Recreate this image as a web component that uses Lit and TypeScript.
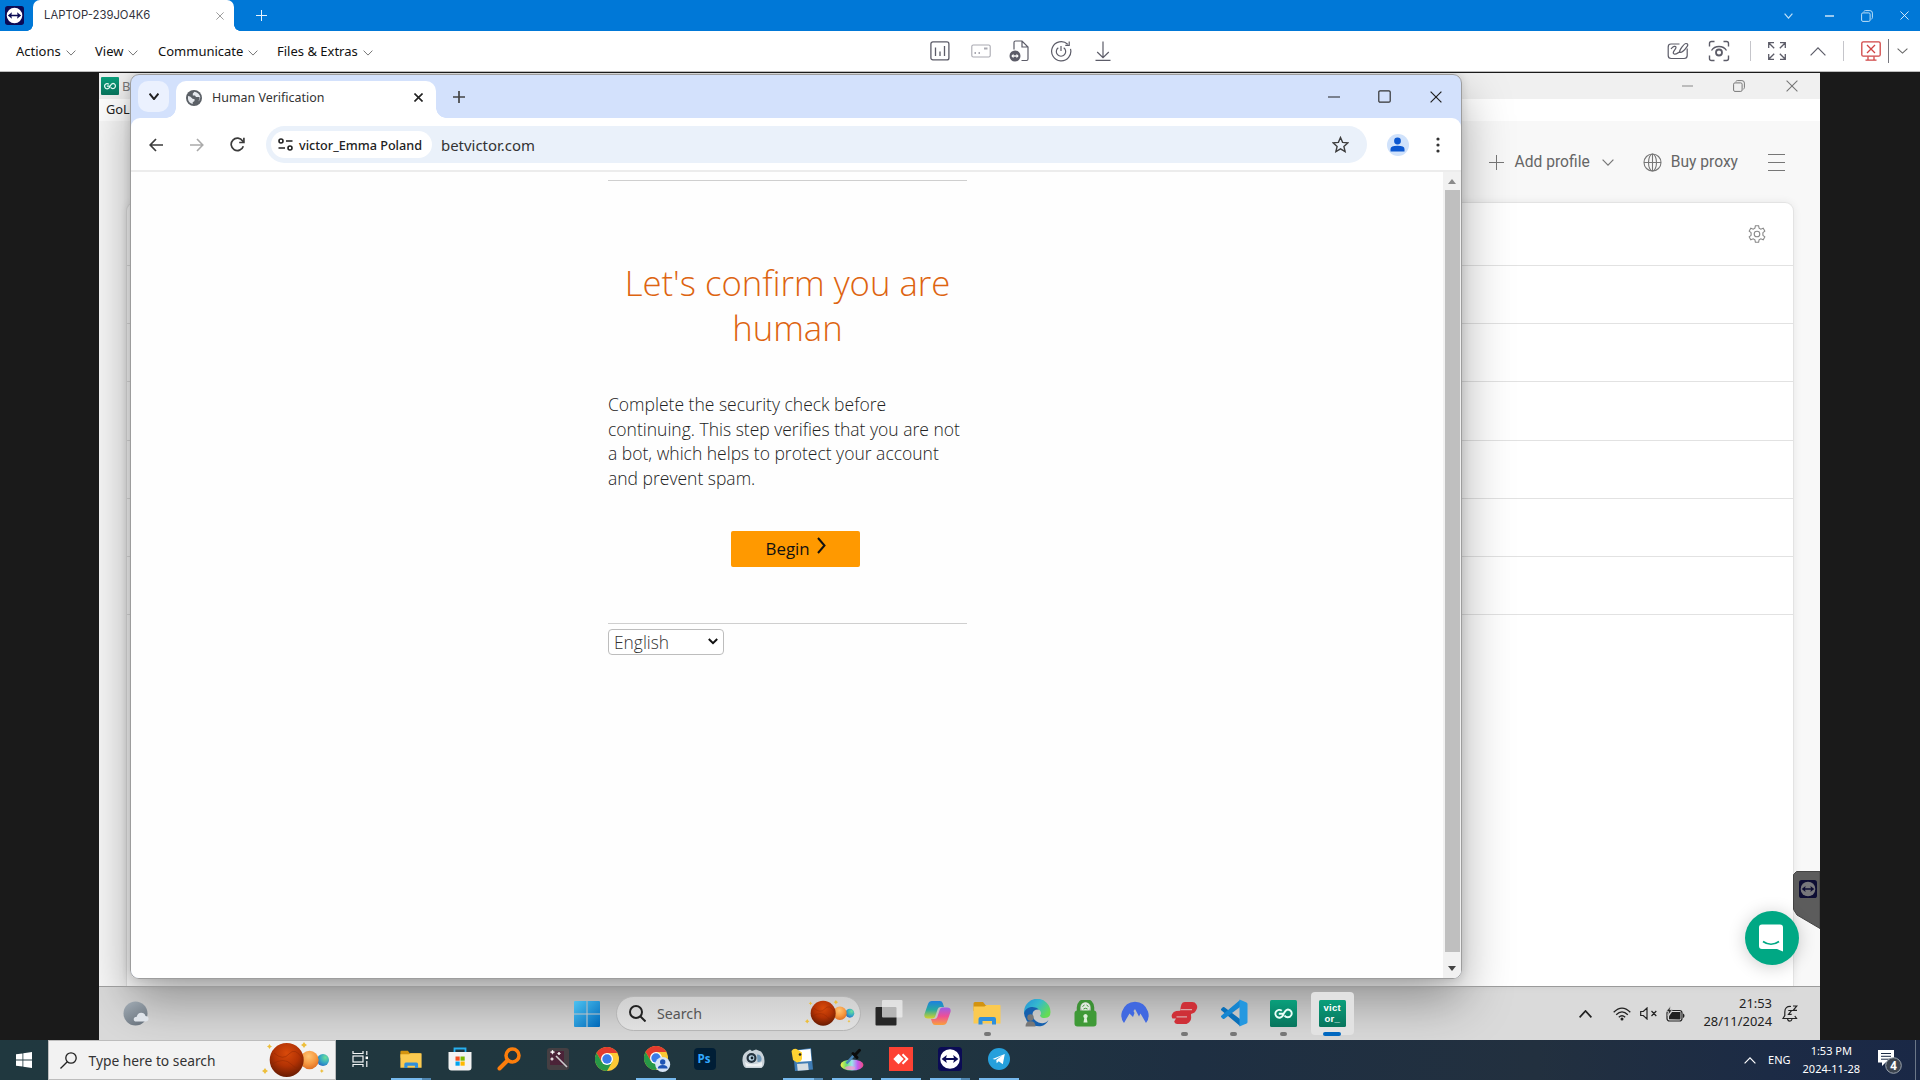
import { LitElement, html, svg, css } from "lit";
import { customElement } from "lit/decorators.js";

/* ---------- shared glyphs ---------- */

const chevron = (w: number, h: number, color: string, sw = 1.2, up = false) => html`
  <svg width=${w} height=${h} viewBox="0 0 ${w} ${h}" fill="none" stroke=${color} stroke-width=${sw}>
    <path d=${up ? `M.6 ${h - 0.6}L${w / 2} .9L${w - 0.6} ${h - 0.6}` : `M.6 .6L${w / 2} ${h - 0.9}L${w - 0.6} .6`} />
  </svg>`;

const teamLogo = (s: number, bg = "#0b0b55", fg = "#fff") => html`
  <svg width=${s} height=${s} viewBox="0 0 24 24">
    <rect width="24" height="24" rx="3.5" fill=${bg} />
    <circle cx="12" cy="12" r="9.8" fill=${fg} />
    <path d="M3.6 12l5.2-4-.7 2.9h7.8L15.2 8l5.2 4-5.2 4 .7-2.9H8.1l.7 2.9z" fill=${bg} />
  </svg>`;

const cross = (s: number, color: string, sw = 1) => html`
  <svg width=${s} height=${s} viewBox="0 0 10 10" fill="none" stroke=${color} stroke-width=${sw}>
    <path d="M.5.5l9 9M9.5.5l-9 9" />
  </svg>`;

const minus = (w: number, color: string) => html`
  <svg width=${w} height="2" viewBox="0 0 ${w} 2"><path d="M0 1h${w}" stroke=${color} stroke-width="1.2" /></svg>`;

const restore = (s: number, color: string) => html`
  <svg width=${s} height=${s} viewBox="0 0 12 12" fill="none" stroke=${color}>
    <rect x=".6" y="2.9" width="8.5" height="8.5" rx="1.3" />
    <path d="M2.9 1.6Q3.2.6 4.3.6h4.6q2.5 0 2.5 2.5v4.6q0 1-1 1.4" />
  </svg>`;

const planets = (w: number) => html`
  <svg width=${w} height=${(w * 36) / 68} viewBox="0 0 68 36">
    <defs>
      <radialGradient id="pa" cx=".5" cy=".3" r=".75"><stop offset="0" stop-color="#d94a0a" /><stop offset=".5" stop-color="#b23204" /><stop offset="1" stop-color="#5c1802" /></radialGradient>
      <radialGradient id="pb" cx=".45" cy=".3" r=".8"><stop offset="0" stop-color="#ffc473" /><stop offset=".5" stop-color="#f79a42" /><stop offset="1" stop-color="#d9631b" /></radialGradient>
      <radialGradient id="pc" cx=".7" cy=".3" r=".9"><stop offset="0" stop-color="#6be09a" /><stop offset=".5" stop-color="#35a7c4" /><stop offset="1" stop-color="#2355c4" /></radialGradient>
    </defs>
    <circle cx="61" cy="18" r="6" fill="url(#pc)" />
    <circle cx="47.5" cy="18" r="9.2" fill="url(#pb)" />
    <circle cx="24.7" cy="18" r="17" fill="url(#pa)" />
    <path d="M12 11q9 8 15 1t13 4M10 22q12-7 19 0t11 2" stroke="#8d2602" stroke-width=".8" fill="none" opacity=".6" />
    <path fill="#edbf3c" d="M7.5 2l.9 1.6 1.6.9-1.6.9-.9 1.6-.9-1.6L5 4.500l1.600-.9zM42 0l1.200 1.800L45 3l-1.800 1.200L42 6l-1.200-1.800L39 3l1.800-1.200zM3 26l1.200 1.800L6 29l-1.800 1.200L3 32l-1.200-1.800L0 29l1.800-1.200zM59.800 27l.7 1.300 1.300.7-1.300.7-.7 1.300-.7-1.300-1.300-.7 1.300-.7z" />
  </svg>`;

const folder = (w: number) => html`
  <svg width=${w} height=${(w * 24) / 28} viewBox="0 0 28 24">
    <path d="M.5 5V2.5Q.5 1 2 1h8l2.500 3H26v6H.5z" fill="#d3930f" />
    <path d="M.5 5.500h11l2-1.500h13.300q.7 0 .7.7V22.500H.5z" fill="#fbca50" />
    <path d="M5.500 23.500v-5.500q0-2 2-2h13.500q2 0 2 2v5.500h-4V20H9.500v3.500z" fill="#2f8fdb" />
  </svg>`;

const chromeMark = svg`
  <circle cx="12" cy="12" r="12" fill="#fcc934" />
  <path d="M1.6 6A12 12 0 0 1 22.4 6H12L6.8 15z" fill="#e33b2e" />
  <path d="M1.6 6A12 12 0 0 0 12 24l5.200-9H6.800z" fill="#279847" />
  <circle cx="12" cy="12" r="6" fill="#fff" />
  <circle cx="12" cy="12" r="4.7" fill="#3a7be8" />`;

const goloMark = (s: number) => html`
  <svg width=${s} height=${s} viewBox="0 0 27 27">
    <defs><linearGradient id="gl" x2="0" y2="1"><stop stop-color="#0a9f7b" /><stop offset="1" stop-color="#08755d" /></linearGradient></defs>
    <rect width="27" height="27" rx="1.5" fill="url(#gl)" />
    <path d="M11.800 10.800a3.900 3.900 0 1 0 1 4.700c1.300-2.700 2.200-5.700 5.200-6a3.900 3.900 0 1 1-3.500 6M8.800 13.800h4.400" fill="none" stroke="#eafff8" stroke-width="1.900" />
  </svg>`;

/* ---------- remote-control session header ---------- */

@customElement("session-header")
export class SessionHeader extends LitElement {
  static styles = css`
    :host { display: block; font-family: "Noto Sans", sans-serif; }
    svg { display: block; }
    .title { height: 31px; background: #0078d7; display: grid; grid-template-columns: 5px 28px 201px 33px 1500px 42px 41px 34px 36px; align-items: center; }
    .title > .c { justify-self: center; }
    .title > .c:last-child { margin-left: 4px; }
    .tab { align-self: stretch; position: relative; background: #fff; border-radius: 7px 7px 0 0; display: flex; align-items: center; justify-content: space-between; padding: 0 10px 2px 11px; font: 11.3px Inter, sans-serif; color: #33333c; }
    .tab svg { margin-top: 2px; }
    .tab::before, .tab::after { content: ""; position: absolute; bottom: 0; width: 6px; height: 6px; }
    .tab::before { left: -6px; background: radial-gradient(circle at 0 0, transparent 5.5px, #fff 6px); }
    .tab::after { right: -6px; background: radial-gradient(circle at 100% 0, transparent 5.5px, #fff 6px); }
    .plus { justify-self: end; }
    .bar { height: 40px; background: #fff; border-bottom: 1px solid #bdbdbd; display: grid; grid-template-columns: 16px 79px 63px 119px 640px 45px 37px 40px 44px 39px 531px 50px 32px 31px 21px 20px 21px 31px 24px 11px 16px; align-items: center; font-size: 13px; color: #111; }
    .bar > * { justify-self: center; }
    .bar > .item { justify-self: stretch; display: flex; align-items: center; gap: 5px; }
    .item svg { margin-top: 3px; }
    .sep { width: 1px; height: 20px; background: #c5c5ca; }
    .tall { height: 24px; background: #77777f; }
  `;
  render() {
    const g = "#5c5c68";
    const down = chevron(10, 6, "#777", 1);
    return html`
      <div class="title">
        <span></span>${teamLogo(19)}
        <div class="tab"><span>LAPTOP-239JO4K6</span>${cross(8, "#777", 0.9)}</div>
        <svg class="plus" width="11" height="11" viewBox="0 0 11 11" stroke="#e8f3fc"><path d="M5.5 0v11M0 5.5h11" /></svg>
        <span></span>
        <div class="c">${chevron(9, 6, "#bfe0f8")}</div>
        <div class="c">${minus(9, "#fff")}</div>
        <div class="c">${restore(12, "#bfe0f8")}</div>
        <div class="c">${cross(9, "#e6f3fd")}</div>
      </div>
      <div class="bar">
        <span></span>
        <div class="item">Actions${down}</div>
        <div class="item">View${down}</div>
        <div class="item">Communicate${down}</div>
        <div class="item">Files &amp; Extras${down}</div>
        <svg width="20" height="20" viewBox="0 0 20 20" fill="none" stroke=${g} stroke-width="1.3"><rect x=".9" y=".9" width="18" height="18" rx="2" /><path d="M5.500 15V6.500M10 15v-4.500M14.500 15V5" /></svg>
        <svg width="20" height="14" viewBox="0 0 20 14" fill="none" stroke="#a9a9b1" stroke-width="1.1"><rect x=".8" y="1" width="18.4" height="12" rx="1.5" /><path d="M13 4.500h3.500" stroke-width="2" /><path d="M3.500 9H5M7.500 9H9" stroke-width="1.800" /></svg>
        <svg width="20" height="22" viewBox="0 0 20 22" fill="none" stroke=${g} stroke-width="1.2"><path d="M5 9.500V2.500q0-1.500 1.500-1.500h6.500l6 6v12q0 1.500-1.500 1.500H12.500M13 1v6h6" /><circle cx="6" cy="16" r="5.5" fill=${g} stroke="none" /><path d="M3.300 16h5.400" stroke="#fff" stroke-width="1.400" /><path d="M4.500 13.800L2.300 16l2.200 2.200zM7.500 13.800L9.700 16l-2.200 2.200z" fill="#fff" stroke="none" /></svg>
        <svg width="22" height="22" viewBox="0 0 22 22" fill="none" stroke=${g} stroke-width="1.2"><path d="M20.500 8.800a9.600 9.600 0 1 1-2.800-4.600M19.200 1.500v3.800h-3.900" /><path d="M8.300 7.700a4.700 4.700 0 1 0 5.400 0M11 6v5" /></svg>
        <svg width="16" height="20" viewBox="0 0 16 20" fill="none" stroke=${g} stroke-width="1.2"><path d="M8 .5v16M2.200 11L8 16.700 13.800 11M.5 19.300h15" /></svg>
        <span></span>
        <svg width="22" height="18" viewBox="0 0 22 18" fill="none" stroke=${g} stroke-width="1.2"><path d="M12.500 2H4Q1.200 2 1.200 5v8.500q0 3 3 3h13q3 0 3-3V6.500" /><path d="M4 7c2-3 5-3.500 5-1.500S5 9.500 6.500 11.500s4-.5 6-1.500M12.500 10.300c-.3-2 4.500-8.800 6.500-8.800s2.200 1.300 1.200 2.800c-1.500 2.200-5.200 6.700-7.700 6z" /></svg>
        <svg width="22" height="22" viewBox="0 0 22 22" fill="none" stroke=${g} stroke-width="1.4"><path d="M1.500 6.500v-3q0-2 2-2h3M15.500 1.500h3q2 0 2 2v3M20.500 15.500v3q0 2-2 2h-3M6.500 20.500h-3q-2 0-2-2v-3M3.500 10.500Q6 6.500 11 6.500t7.500 4" /><circle cx="11" cy="12.5" r="3" stroke-width="1.8" /></svg>
        <span class="sep"></span>
        <svg width="18" height="18" viewBox="0 0 18 18" fill="none" stroke=${g} stroke-width="1.3"><path d="M.7 6V.7H6M.7.7l5.500 5.500M12 .7h5.300V6M17.300.7l-5.500 5.500M17.300 12v5.300H12M17.300 17.300l-5.500-5.500M6 17.300H.7V12M.7 17.300l5.500-5.500" /></svg>
        <span></span>
        <div>${chevron(16, 9, g, 1.2, true)}</div>
        <span class="sep"></span>
        <svg width="20" height="20" viewBox="0 0 20 20" fill="none" stroke="#d04545" stroke-width="1.3"><rect x=".8" y=".8" width="18.4" height="14.4" rx="1.5" /><path d="M6 4l8 8M14 4l-8 8M7 15.500V19M13 15.500V19M4.500 19.200h11" /></svg>
        <span class="sep tall"></span>
        <div>${chevron(11, 6, "#666", 1.1)}</div>
      </div>`;
  }
}

/* ---------- background profile manager window ---------- */

@customElement("profile-manager")
export class ProfileManager extends LitElement {
  static styles = css`
    :host { display: flex; flex-direction: column; font-family: Roboto, sans-serif; background: #f8f8f8; }
    svg { display: block; }
    .title { height: 26px; background: #f0f0f0; display: grid; grid-template-columns: 19px 1fr 24px 28px 24px 29px 24px 16px; align-items: center; padding: 0 0 1px 1px; box-sizing: border-box; font: 13px "Noto Sans", sans-serif; color: #777; }
    .title > * { justify-self: center; }
    .title .name { justify-self: start; padding-left: 3px; }
    .menu { height: 22px; background: #fff; padding-left: 7px; font: 12.8px/21px "Noto Sans", sans-serif; color: #222; }
    .actions { box-sizing: border-box; height: 81px; display: flex; justify-content: flex-end; align-items: center; padding: 1px 35px 0 0; font-size: 15.6px; color: #666; }
    .g1 { margin-left: 11px; }
    .g2 { margin-left: 12px; }
    .g3 { margin-left: 29px; }
    .g4 { margin-left: 9px; }
    .g5 { margin-left: 30px; }
    .card { flex: 1; margin: 0 26px 0 27px; background: #fff; border: 1px solid #e3e3e3; border-bottom: 0; border-radius: 9px 9px 0 0; box-shadow: 0 0 9px rgba(0, 0, 0, 0.07); }
    .row { box-sizing: border-box; height: 58.2px; border-bottom: 1px solid #e2e2e2; }
    .head { height: 63px; display: flex; justify-content: flex-end; align-items: center; padding-right: 27px; }
  `;
  render() {
    const g = "#777";
    return html`
      <div class="title">
        ${goloMark(18)}<span class="name">B</span>
        <div>${minus(11, "#999")}</div><span></span>
        ${restore(12, "#777")}<span></span>
        ${cross(12, "#777", 0.9)}
      </div>
      <div class="menu">GoLo</div>
      <div class="actions">
        <svg width="15" height="15" viewBox="0 0 15 15" stroke=${g}><path d="M7.5 0v15M0 7.5h15" /></svg>
        <span class="g1">Add profile</span>
        <div class="g2">${chevron(12, 7, g, 1.2)}</div>
        <svg class="g3" width="19" height="19" viewBox="0 0 19 19" fill="none" stroke=${g} stroke-width="1.1"><circle cx="9.5" cy="9.5" r="8.5" /><ellipse cx="9.5" cy="9.5" rx="4" ry="8.5" /><path d="M1 9.500h17M9.500 1v17" /></svg>
        <span class="g4">Buy proxy</span>
        <svg class="g5" width="17" height="17" viewBox="0 0 17 17" stroke=${g}><path d="M0 .5h17M0 8.500h17M0 16.500h17" /></svg>
      </div>
      <div class="card">
        <div class="row head">
          <svg width="18" height="18" viewBox="0 0 18 18" fill="none" stroke="#888" stroke-width="1.1"><circle cx="9" cy="9" r="2.8" /><path d="M7.400.7h3.200l.5 2.500 1.700 1 2.400-.9 1.600 2.800-1.900 1.600v2.600l1.900 1.600-1.600 2.800-2.400-.9-1.700 1-.5 2.500H7.400l-.5-2.500-1.700-1-2.400.9-1.600-2.800 1.900-1.600V7.700L1.200 6.100l1.600-2.800 2.400.9 1.700-1z" /></svg>
        </div>
        ${[0, 1, 2, 3, 4, 5].map(() => html`<div class="row"></div>`)}
      </div>`;
  }
}

/* ---------- browser window ---------- */

@customElement("browser-window")
export class BrowserWindow extends LitElement {
  static styles = css`
    :host { display: flex; flex-direction: column; box-sizing: border-box; border: 1px solid #9d9d9d; border-radius: 9px; overflow: hidden; background: #d3e1fc; font-family: "Noto Sans", sans-serif; }
    svg { display: block; }
    .strip { height: 43px; display: grid; grid-template-columns: 7px 31px 7px 260px 29px 1fr 40px 8px 44px 7px 46px 2px; align-items: center; }
    .strip > * { justify-self: center; }
    .strip > .list { width: 31px; height: 31px; border-radius: 10px; background: #ebf1fe; display: grid; place-items: center; }
    .strip > .tab { position: relative; box-sizing: border-box; width: 260px; height: 37px; align-self: end; background: #fff; border-radius: 10px 10px 0 0; display: flex; align-items: center; padding: 0 13px 4px 10px; font-size: 12.45px; color: #333; }
    .strip > .new { justify-self: end; }
    .tab::before, .tab::after { content: ""; position: absolute; bottom: 0; width: 10px; height: 10px; }
    .tab::before { left: -10px; background: radial-gradient(circle at 0 0, transparent 9.5px, #fff 10px); }
    .tab::after { right: -10px; background: radial-gradient(circle at 100% 0, transparent 9.5px, #fff 10px); }
    .tab span { flex: 1; padding-left: 10px; }
    .tools { height: 54px; box-sizing: border-box; padding-top: 1px; border-bottom: 2px solid #ececec; border-radius: 9px 9px 0 0; background: #fff; display: grid; grid-template-columns: 5px 40px 41px 40px 9px 1101px 10px 41px 40px 1fr; align-items: center; }
    .tools > * { justify-self: center; }
    .tools > .omni { justify-self: stretch; height: 37px; border-radius: 19px; background: #eaf1fa; display: flex; align-items: center; padding: 0 18px 0 5px; }
    .chip { box-sizing: border-box; width: 161px; height: 27px; border-radius: 14px; background: #fff; display: flex; align-items: center; padding: 0 0 0 7px; gap: 6px; font-size: 12.65px; font-weight: 500; color: #222; white-space: nowrap; }
    .url { flex: 1; padding-left: 9px; font-size: 14.95px; color: #333; }
    .view { flex: 1; background: #fefefe; display: flex; }
    .page { flex: 1; font-family: "Open Sans", sans-serif; font-weight: 300; }
    .box { width: 359px; margin-left: 477px; padding-top: 8px; }
    .rule { height: 1px; background: #cfcfcf; }
    h1 { margin: 79px 0 0; font-size: 34.7px; line-height: 45px; font-weight: 300; color: #dd6410; text-align: center; }
    p { margin: 42px 0 0; font-size: 17.5px; line-height: 24.7px; color: #222; white-space: nowrap; }
    .begin { margin: 40px 0 56px 123px; width: 129px; height: 36px; border: 0; border-radius: 2px; background: #ff9900; font: 400 16.9px "Open Sans", sans-serif; color: #111; display: flex; align-items: center; padding: 0 0 1px 34.500px; gap: 7px; }
    .begin svg { margin-top: -5px; }
    .lang { margin-top: 5px; box-sizing: border-box; width: 116px; height: 26px; border: 1px solid #bdbdbd; border-radius: 4px; background: #fff; display: flex; align-items: center; justify-content: space-between; padding: 0 5px 0 5px; font-size: 17.4px; line-height: 24px; color: #333; }
    .scroll { width: 18px; background: #f1f1f1; display: flex; flex-direction: column; align-items: center; }
    .scroll svg { margin: 7px 0 6px; }
    .scroll .end { margin: 14px 0 0; }
    .thumb { width: 15px; height: 762px; background: #bfbfbf; }
    .avatar { width: 22px; height: 22px; border-radius: 50%; background: #d0e2fb; display: grid; place-items: center; }
  `;
  render() {
    return html`
      <div class="strip">
        <span></span>
        <div class="list">${chevron(10, 7, "#222", 2)}</div>
        <span></span>
        <div class="tab">
          <svg width="16" height="16" viewBox="0 0 16 16"><circle cx="8" cy="8" r="8" fill="#5b6066" /><path d="M2 6q2.500.3 3.500 1.800T8.500 9v2l-1.800 1.200V14Q2.500 13 2 9zM8.500 1.800L6.800 3.500v2H9L10 7h3.500v2.500l-1.500 2q2.500-1.500 2.300-4.200Q13.500 2.800 8.500 1.800z" fill="#e6e9ee" /></svg>
          <span>Human Verification</span>
          ${cross(9, "#222", 1.8)}
        </div>
        <svg class="new" width="12" height="12" viewBox="0 0 12 12" stroke="#444" stroke-width="1.7"><path d="M6 0v12M0 6h12" /></svg>
        <span></span>
        <div>${minus(12, "#222")}</div><span></span>
        <svg width="13" height="13" viewBox="0 0 13 13" fill="none" stroke="#333" stroke-width="1.2"><rect x=".8" y=".8" width="11.4" height="11.4" rx="1.2" /></svg><span></span>
        ${cross(12, "#222")}
      </div>
      <div class="tools">
        <span></span>
        <svg width="14" height="14" viewBox="0 0 14 14" fill="none" stroke="#3c3c3c" stroke-width="1.7"><path d="M14 7H1.500M7 1L1.200 7 7 13" /></svg>
        <svg width="14" height="14" viewBox="0 0 14 14" fill="none" stroke="#aaa" stroke-width="1.6"><path d="M0 7h12.500M7 1l5.800 6L7 13" /></svg>
        <svg width="15" height="15" viewBox="0 0 15 15" fill="none" stroke="#3c3c3c" stroke-width="1.7"><path d="M13.300 9.200A6.200 6.200 0 1 1 12.600 4l1 1.200" /><path d="M13.900.8v4.700H9.200" /></svg>
        <span></span>
        <div class="omni">
          <div class="chip">
            <svg width="15" height="13" viewBox="0 0 15 13" fill="none" stroke="#222" stroke-width="1.6"><circle cx="3" cy="3" r="2" /><circle cx="12" cy="10" r="2" /><path d="M8 3h6.500M.5 10H7" /></svg>
            <span>victor_Emma Poland</span>
          </div>
          <span class="url">betvictor.com</span>
          <svg width="17" height="17" viewBox="0 0 17 17" fill="none" stroke="#3f3f3f" stroke-width="1.4"><path d="M8.500 1.500l2.100 4.900 5.300.5-4 3.500 1.200 5.200-4.600-2.800-4.600 2.800 1.200-5.200-4-3.500 5.300-.5z" /></svg>
        </div>
        <span></span>
        <div class="avatar"><svg width="15" height="15" viewBox="0 0 15 15" fill="#0b57d0"><circle cx="7.5" cy="4" r="3.4" /><path d="M.5 14.500V12q0-3.300 7-3.300t7 3.300v2.500z" /></svg></div>
        <svg width="4" height="16" viewBox="0 0 4 16" fill="#333"><circle cx="2" cy="2" r="1.6" /><circle cx="2" cy="8" r="1.6" /><circle cx="2" cy="14" r="1.6" /></svg>
      </div>
      <div class="view">
        <div class="page">
          <div class="box">
            <div class="rule"></div>
            <h1>Let's confirm you are human</h1>
            <p>Complete the security check before<br />continuing. This step verifies that you are not<br />a bot, which helps to protect your account<br />and prevent spam.</p>
            <button class="begin">Begin<svg width="9" height="17" viewBox="0 0 9 17" fill="none" stroke="#111" stroke-width="2"><path d="M1 1l6.500 7.500L1 16" /></svg></button>
            <div class="rule"></div>
            <div class="lang">English<svg width="10" height="7" viewBox="0 0 10 7" fill="none" stroke="#111" stroke-width="2"><path d="M.8 1L5 5.200 9.200 1" /></svg></div>
          </div>
        </div>
        <div class="scroll">
          <svg width="8" height="5" viewBox="0 0 8 5" fill="#8a8a8a"><path d="M0 5l4-5 4 5z" /></svg>
          <div class="thumb"></div>
          <svg class="end" width="8" height="5" viewBox="0 0 8 5" fill="#444"><path d="M0 0l4 5 4-5z" /></svg>
        </div>
      </div>`;
  }
}

/* ---------- taskbar of the remote machine ---------- */

@customElement("remote-taskbar")
export class RemoteTaskbar extends LitElement {
  static styles = css`
    :host { display: grid; grid-template-columns: 26px 449px 26px 16px 245px 1fr; align-items: center; height: 54px; box-sizing: border-box; border-top: 1px solid #9b9b9b; font-family: "Noto Sans", sans-serif; }
    svg { display: block; }
    .weather { margin-left: -2px; }
    .pill { box-sizing: border-box; height: 35px; border: 1px solid #b5b5b5; border-radius: 18px; background: linear-gradient(#d0d0d0, #e0e0e0); display: flex; align-items: center; padding: 0 5px 0 12px; font-size: 14.2px; color: #555; }
    .pill span { flex: 1; padding-left: 11px; }
    .right { display: flex; }
    .apps { display: flex; align-items: stretch; height: 53px; margin-left: 3px; }
    .app { width: 49.3px; display: grid; grid-template-rows: 44px 9px; place-items: center; }
    .app > svg { margin-top: 8px; }
    .dot { width: 7px; height: 4px; border-radius: 2px; background: #777; margin-top: -4px; }
    .on { position: relative; }
    .on::before { content: ""; position: absolute; left: 3px; top: 5px; width: 43px; height: 43px; border-radius: 4px; background: #e2e2e2; }
    .on > * { position: relative; }
    .on .dot { width: 18px; background: #0067c0; }
    .label { margin-top: 8px; width: 27px; height: 27px; border-radius: 1.5px; background: linear-gradient(#0a9f7b, #08755d); color: #fff; font: 700 9.5px/11px "Liberation Sans", sans-serif; letter-spacing: 0.3px; display: flex; flex-direction: column; align-items: center; justify-content: center; }
    .tray { display: flex; align-items: center; margin-left: auto; padding-right: 22px; color: #222; font-size: 12.9px; line-height: 18px; }
    .wifi { margin-left: 21px; }
    .sound, .battery { margin-left: 9px; }
    .clock { margin: -3px 0 0 18px; text-align: right; }
    .bell { margin-left: 10px; }
  `;
  render() {
    return html`
      <span></span>
      <svg class="weather" width="26" height="25" viewBox="0 0 26 25"><defs><linearGradient id="m" x2=".6" y2="1"><stop stop-color="#a3adb6" /><stop offset="1" stop-color="#6d7781" /></linearGradient></defs><circle cx="12.5" cy="12.5" r="12" fill="url(#m)" /><path d="M13.500 20.500q-2.800 0-2.800-2.300t3-2.500q1-4 4.500-4 3.300 0 4.300 3.300 3 .2 3 2.800t-3 2.700z" fill="#dfe4ea" /></svg>
      <svg width="26" height="26" viewBox="0 0 26 26"><defs><linearGradient id="w" x2="1" y2="1"><stop stop-color="#4cc2f1" /><stop offset="1" stop-color="#0067b8" /></linearGradient></defs><path fill="url(#w)" d="M0 1q0-1 1-1h11.500v12.500H0zM13.500 0H25q1 0 1 1v11.500H13.500zM0 13.500h12.500V26H1q-1 0-1-1zM13.500 13.500H26V25q0 1-1 1H13.500z" /></svg>
      <span></span>
      <div class="pill">
        <svg width="17" height="17" viewBox="0 0 17 17" fill="none" stroke="#222" stroke-width="2"><circle cx="7" cy="7" r="6" /><path d="M11.500 11.500l5 5" /></svg>
        <span>Search</span>${planets(50)}
      </div>
      <div class="right">
        <div class="apps">
          <div class="app"><svg width="28" height="26" viewBox="0 0 28 26"><rect x=".5" y="7" width="21" height="18.5" rx="1" fill="#262626" /><rect x="7" y="0" width="20.5" height="17.5" rx="1" fill="#f2f2f2" opacity=".7" /></svg></div>
          <div class="app">
            <svg width="27" height="26" viewBox="0 0 27 26"><defs><linearGradient id="c1" x2="0" y2="1"><stop stop-color="#1c7fe0" /><stop offset=".5" stop-color="#29a99f" /><stop offset="1" stop-color="#d6d22a" /></linearGradient><linearGradient id="c2" x2="0" y2="1"><stop stop-color="#9a5fe8" /><stop offset=".5" stop-color="#ee4f96" /><stop offset="1" stop-color="#f9a13a" /></linearGradient></defs>
              <path d="M8 1h8q2 0 2.800 2.200L20 7h-3.500q-2 0-2.800 2l-2.500 7.500q-.7 2-2.700 2H4q-4.500 0-3.500-4.500L4 4q1-3 4-3z" fill="url(#c1)" />
              <path d="M19 25h-8q-2 0-2.800-2.200L7 19h3.500q2 0 2.800-2l2.500-7.500q.7-2 2.700-2H23q4.500 0 3.500 4.500L23 22q-1 3-4 3z" fill="url(#c2)" />
            </svg></div>
          <div class="app">${folder(28)}<i class="dot"></i></div>
          <div class="app">
            <svg width="28" height="28" viewBox="0 0 28 28"><defs><linearGradient id="e" x2="1" y2=".6"><stop stop-color="#2390d8" /><stop offset=".5" stop-color="#35b8cf" /><stop offset="1" stop-color="#65dc52" /></linearGradient></defs><path d="M1 13A13.200 13.200 0 0 1 27.500 13q0 6-6 6-4 0-4.500-2.500 1-1 1-2.500-.5-4-5-4Q8 10 4 14 2 16 1 13z" fill="url(#e)" /><path d="M1 14q1.500-5 7-6 5.500-.5 8 2.500-6-.5-6.500 4.500 0 6 6 8.500t10-2.500q-2 5-8 6.300Q3 28 1 14z" fill="#1660ae" /><circle cx="7.5" cy="18.5" r="3.2" fill="#777" /><path d="M2.500 27.500q0-5.300 5-5.300t5 5.300z" fill="#777" /></svg></div>
          <div class="app">
            <svg width="23" height="27" viewBox="0 0 23 27"><path d="M4.500 12V7.500a7 7 0 0 1 14 0V12" fill="none" stroke="#3c9134" stroke-width="3.500" /><circle cx="11.5" cy="7" r="4.5" fill="#dfeadd" /><path d="M8.500 6.500l2-1.500M14.500 6.500l-2-1.500M9.500 9q2-1.500 4 0" stroke="#3c9134" fill="none" /><rect x=".5" y="10.5" width="22" height="16" rx="3" fill="#3f9a37" /><path d="M11.500 14a2.200 2.200 0 0 1 1.200 4l.8 4.500h-4l.8-4.500a2.200 2.200 0 0 1 1.200-4z" fill="#dcefd9" /></svg></div>
          <div class="app">
            <svg width="28" height="25" viewBox="0 0 28 25"><path d="M3 22Q-1 17 1 10.500 4.500 1 14 .8 23.500 1 27 10.500 29 17 25 22l-5.500-9.500-1.500 3L14 8l-1.500 2 1 2-1.500 4-3.500-3.500z" fill="#4169e1" /></svg></div>
          <div class="app">
            <svg width="27" height="24" viewBox="0 0 27 24"><path d="M14.500 1h6.500a5 5 0 0 1 4.500 7.500q-1.200 3.500-5.500 4.500v1.500q.5 3-.5 5T15.500 23H6q-2.500-.3-2.800-2.500L5 17.500H1.500Q0 15.500 1.200 13t4-3l4-.3q.3-4 1.300-6.500T14.500 1z" fill="#cf3038" /><path d="M9.500 8.700h11.500M5.500 15.800h10.500" stroke="#d9a5a8" stroke-width="1.300" /></svg><i class="dot"></i></div>
          <div class="app">
            <svg width="28" height="28" viewBox="0 0 28 28"><path d="M20 1v26L1.500 11.500q-1-.8-.2-1.700l1.500-1.500q.8-.7 1.600 0L20 20z" fill="#0a6fb8" /><path d="M20 27V1L1.500 16.500q-1 .8-.2 1.700l1.500 1.500q.8.7 1.600 0L20 8z" fill="#1586d1" /><path d="M19.500.5l7 3q1 .5 1 1.500v18q0 1-1 1.500l-7 3z" fill="#2598e0" /></svg><i class="dot"></i></div>
          <div class="app">${goloMark(27)}<i class="dot"></i></div>
          <div class="app on"><div class="label"><div>vict</div><div>or_</div></div><i class="dot"></i></div>
        </div>
        <div class="tray">
          ${chevron(13, 8, "#222", 1.7, true)}
          <svg class="wifi" width="18" height="14" viewBox="0 0 18 14" fill="none" stroke="#222" stroke-width="1.3"><path d="M.7 5.200Q9-3 17.300 5.200M3.200 7.800Q9 2 14.800 7.800M5.800 10.300Q9 7.300 12.200 10.300" /><circle cx="9" cy="12" r="1.5" fill="#222" stroke="none" /></svg>
          <svg class="sound" width="17" height="13" viewBox="0 0 17 13" fill="none" stroke="#222" stroke-width="1.2"><path d="M.7 4.500v4h2.600L7 12V1L3.300 4.500zM11.500 4l4.800 5M16.300 4l-4.800 5" /></svg>
          <svg class="battery" width="19" height="16" viewBox="0 0 19 16"><rect x="1" y="4.5" width="15" height="10.5" rx="2.5" fill="none" stroke="#222" stroke-width="1.2" /><path d="M6 6h8.500v6.500q0 1-1 1L3 13.300v-3z" fill="#222" /><path d="M17 7.500q1.500.5 1.500 2.200T17 12z" fill="#222" /><path d="M4.500 0L.3 5.500h2.300L2 9.500l4.300-5.700H3.900z" fill="#222" stroke="#d9d9d9" stroke-width=".7" /></svg>
          <div class="clock">21:53<br />28/11/2024</div>
          <svg class="bell" width="16" height="17" viewBox="0 0 16 17" fill="none" stroke="#222" stroke-width="1.2"><path d="M9 1.500Q2.800 1 2.800 7v3.500L1 13.500h13.500L12.800 11M5.500 14q.5 2.200 2.300 2.200T10 14" /><path d="M6.300 5.500h3.200L6.500 9.300h3.200M11 1h3.800l-3.600 4.300H15" /></svg>
        </div>
      </div>`;
  }
}

/* ---------- taskbar of the local machine ---------- */

@customElement("local-taskbar")
export class LocalTaskbar extends LitElement {
  static styles = css`
    :host { display: flex; height: 40px; background: linear-gradient(90deg, #20383f, #20363f 45%, #1e2f42 62%, #22303f 80%, #1c2b45 92%, #1a2846); font-family: "Noto Sans", sans-serif; color: #fff; }
    svg { display: block; }
    .start { width: 48px; display: grid; place-items: center; }
    .search { box-sizing: border-box; width: 288px; margin-right: 1px; border: 1px solid #bdbdbd; background: #f2f2f2; display: flex; align-items: center; padding: 0 5px 0 11px; color: #333; font-size: 13.8px; }
    .search span { flex: 1; padding: 1px 0 0 11.5px; }
    .app { width: 49px; display: grid; grid-template-rows: 38px 2px; justify-items: center; align-items: center; }
    .view { margin-left: -3px; }
    .badged { margin-right: -3px; }
    .app i { width: 40px; height: 2px; background: #76b9ed; }
    .app i.multi { background: linear-gradient(90deg, #76b9ed 31px, #4f86b0 31px); }
    .tray { margin-left: auto; display: flex; align-items: center; font-size: 11px; line-height: 18px; }
    .lang { margin-left: 12px; }
    .clock { text-align: center; margin: -1px 0 0 12px; }
    .notes { margin: 2px 0 0 17px; }
    .edge { width: 1px; height: 40px; background: #6b7788; margin: 0 4px 0 13px; }
    text { font: 700 11.5px "Open Sans", sans-serif; }
  `;
  render() {
    return html`
      <div class="start"><svg width="16" height="16" viewBox="0 0 16 16" fill="#fff"><path d="M0 2.300L6.500 1.400v6.200H0zM7.300 1.300L16 0v7.600H7.300zM0 8.400h6.500v6.200L0 13.700zM7.300 8.400H16V16l-8.700-1.300z" /></svg></div>
      <div class="search">
        <svg width="17" height="17" viewBox="0 0 17 17" fill="none" stroke="#222" stroke-width="1.3"><circle cx="11" cy="6" r="5.2" /><path d="M7.300 9.700L.5 16.500" /></svg>
        <span>Type here to search</span>${planets(68)}
      </div>
      <div class="app"><svg class="view" width="17" height="16" viewBox="0 0 17 16" fill="none" stroke="#f4f6f7" stroke-width="1.2"><path d="M1 0v2.500h10V0M1 16v-2.500h10V16M14.800 0v4M14.800 10v6" /><rect x="1" y="5" width="10" height="6" /><rect x="13.6" y="5.5" width="2.4" height="2.6" fill="#fff" stroke="none" /></svg></div>
      <div class="app">${folder(22)}<i class="multi"></i></div>
      <div class="app"><svg width="24" height="24" viewBox="0 0 24 24"><path d="M6.500 6V1.500h11V6" fill="none" stroke="#27b0f0" stroke-width="1.8" /><path d="M.5 5h23v15.500q0 3-3 3h-17q-3 0-3-3z" fill="#f3f3f3" /><path d="M7.500 9.500h4.200v4.200H7.500z" fill="#f25022" /><path d="M12.500 9.500h4.200v4.200h-4.200z" fill="#7fba00" /><path d="M7.500 14.500h4.200v4.200H7.500z" fill="#00a4ef" /><path d="M12.500 14.500h4.200v4.200h-4.200z" fill="#ffb900" /></svg></div>
      <div class="app"><svg width="24" height="24" viewBox="0 0 24 24" fill="none" stroke="#fd7e0c"><circle cx="15.5" cy="8.5" r="6.5" stroke-width="3.5" /><path d="M10.500 13.500L2.500 21.500" stroke-width="4" stroke-linecap="round" /></svg></div>
      <div class="app"><svg width="22" height="22" viewBox="0 0 22 22"><rect width="22" height="22" rx="3" fill="#453f43" /><path d="M3 3h14v14H3z" fill="#4b2338" /><path d="M9 8l11 11" stroke="#cfcbcd" stroke-width="1.6" /><path d="M5.500 2l.6 1.500 1.500.6-1.500.6-.6 1.500-.6-1.500-1.500-.6 1.500-.6zM12 4l.5 1 1 .5-1 .5-.5 1-.5-1-1-.5 1-.5zM5 9.500l.5 1 1 .5-1 .5-.5 1-.5-1-1-.5 1-.5z" fill="#fff" stroke="#fff" stroke-width=".6" /></svg></div>
      <div class="app"><svg width="24" height="24" viewBox="0 0 24 24">${chromeMark}</svg></div>
      <div class="app"><svg class="badged" width="27" height="26" viewBox="0 0 27 26">${chromeMark}<circle cx="18.7" cy="18.5" r="7.5" fill="#d6e4f6" /><circle cx="18.7" cy="16" r="2.7" fill="#1f55b5" /><path d="M13.800 22.500q0-3.500 4.900-3.500t4.900 3.500z" fill="#1f55b5" /></svg><i></i></div>
      <div class="app"><svg width="22" height="22" viewBox="0 0 22 22"><rect width="22" height="22" rx="4" fill="#001e36" /><text x="3.5" y="15" fill="#31a8ff">Ps</text></svg></div>
      <div class="app"><svg width="23" height="20" viewBox="0 0 23 20"><path d="M.5 12Q0 6 4 3l4-2.500 2 1.500L14 .5l5 2q3.500 4 3.500 9.500 0 5-3 7H4q-3-1-3.500-7z" fill="#c9d2d9" /><path d="M3 13q7 4.500 17 0v4.500H4z" fill="#eef1f3" /><circle cx="9.5" cy="9" r="5" fill="#24333f" /><circle cx="9.5" cy="9" r="2.8" fill="#bfd8e8" /><circle cx="10" cy="9" r="1.4" fill="#14202a" /><path d="M15 5.500q4 0 4.500 4t-4 3.500z" fill="#6f98b8" /></svg></div>
      <div class="app"><svg width="23" height="23" viewBox="0 0 23 23"><path d="M2 2.500L20 0l2 21.500L4 23z" fill="#3f7cb5" /><path d="M5 2.500L19.500 1l1 12L6 14z" fill="#fff" /><path d="M6 16l11-.8.7 6.800-11 .8z" fill="#d6dde2" /><path d="M.5 3q2-3 5-2L11 4.500V11q-1 3-5 3.500L2 12z" fill="#ffd332" /><circle cx="9" cy="6.5" r="1.3" fill="#222" /></svg><i class="multi"></i></div>
      <div class="app">
        <svg width="24" height="23" viewBox="0 0 24 23"><defs><linearGradient id="rb"><stop stop-color="#fff04a" /><stop offset=".25" stop-color="#6de06c" /><stop offset=".5" stop-color="#9be4ee" /><stop offset=".75" stop-color="#c45cf0" /><stop offset="1" stop-color="#f04a7d" /></linearGradient></defs><ellipse cx="12" cy="17" rx="11.5" ry="5.5" fill="url(#rb)" /><ellipse cx="10" cy="20" rx="5" ry="2" fill="#ff8fd0" opacity=".7" /><path d="M6.500 15.500L15 6" stroke="#4a86b8" stroke-width="2.600" /><path d="M13 5.500l4 4M15.500 6.500L19.500 2.300" stroke="#0b0b0b" stroke-width="3" stroke-linecap="round" /></svg><i></i></div>
      <div class="app"><svg width="24" height="24" viewBox="0 0 24 24"><path d="M0 0h24v24H0z" fill="#fd4234" /><path d="M9.500 6.800l5.200 5.200-5.200 5.200L4.300 12z" fill="#fff" /><path d="M13.500 7.300l4.700 4.700-4.700 4.700" fill="none" stroke="#fff" stroke-width="2" /></svg><i></i></div>
      <div class="app">${teamLogo(24)}<i class="multi"></i></div>
      <div class="app"><svg width="22" height="22" viewBox="0 0 22 22"><circle cx="11" cy="11" r="11" fill="#26a0dc" /><path d="M4.500 11L16.800 6l-2 10.300-4.100-3-2 1.900-.4-3.300 6-4.500-7.300 4z" fill="#fff" /></svg><i></i></div>
      <div class="tray">
        ${chevron(12, 7, "#fff", 1.2, true)}
        <span class="lang">ENG</span>
        <div class="clock">1:53 PM<br />2024-11-28</div>
        <svg class="notes" width="25" height="25" viewBox="0 0 25 25"><path d="M1 1h16v12.500H8.500L5 17v-3.500H1z" fill="#fff" /><path d="M4 4.500h10M4 7.300h10M4 10.200h10" stroke="#1c2b45" /><circle cx="16.5" cy="16.5" r="7.8" fill="#3b434e" stroke="#9aa3ad" /><text x="13.2" y="20.7" fill="#fff">4</text></svg>
        <span class="edge"></span>
      </div>`;
  }
}

/* ---------- composition ---------- */

@customElement("app-root")
export class AppRoot extends LitElement {
  static styles = css`
    :host { display: flex; flex-direction: column; width: 1920px; height: 1080px; overflow: hidden; background: #1a1a1a; }
    svg { display: block; }
    .stage { flex: 1; display: flex; padding: 1px 100px 0 99px; }
    .screen { flex: 1; position: relative; overflow: hidden; display: flex; flex-direction: column; background: #dadada; }
    profile-manager { flex: 1; }
    remote-taskbar { position: relative; z-index: 2; }
    browser-window, .shade { position: absolute; left: 31px; top: 1px; width: 1332px; height: 905px; }
    .shade { border-radius: 9px; box-shadow: 0 22px 50px rgba(0, 0, 0, 0.34), 0 0 10px rgba(0, 0, 0, 0.14); }
    .handle { position: absolute; right: 0; top: 798px; }
    .badge { position: absolute; right: 3px; top: 807px; }
    .chat { position: absolute; left: 1645.500px; top: 838px; width: 54px; height: 54px; border-radius: 50%; background: #00a884; box-shadow: 0 2px 18px rgba(0, 0, 0, 0.2); display: grid; place-items: center; }
  `;
  render() {
    return html`
      <session-header></session-header>
      <div class="stage">
        <div class="screen">
          <profile-manager></profile-manager>
          <div class="shade"></div>
          <remote-taskbar></remote-taskbar>
          <browser-window></browser-window>
          <svg class="handle" width="27" height="58" viewBox="0 0 27 58"><path d="M3.500.5H27v57L4 44 .5 38.500v-35z" fill="#5c5c5c" stroke="#444" /></svg>
          <div class="badge">${teamLogo(18, "#0d0d33", "#77777b")}</div>
          <div class="chat"><svg width="25" height="28" viewBox="0 0 25 28"><path d="M3 .5h18q3 0 3 3V27.500l-6-2.500H3q-3 0-3-3V3.500q0-3 3-3z" fill="#fff" /><path d="M4 17.500q8 5.500 16 0" fill="none" stroke="#00a884" stroke-width="1.700" /></svg></div>
        </div>
      </div>
      <local-taskbar></local-taskbar>`;
  }
}
